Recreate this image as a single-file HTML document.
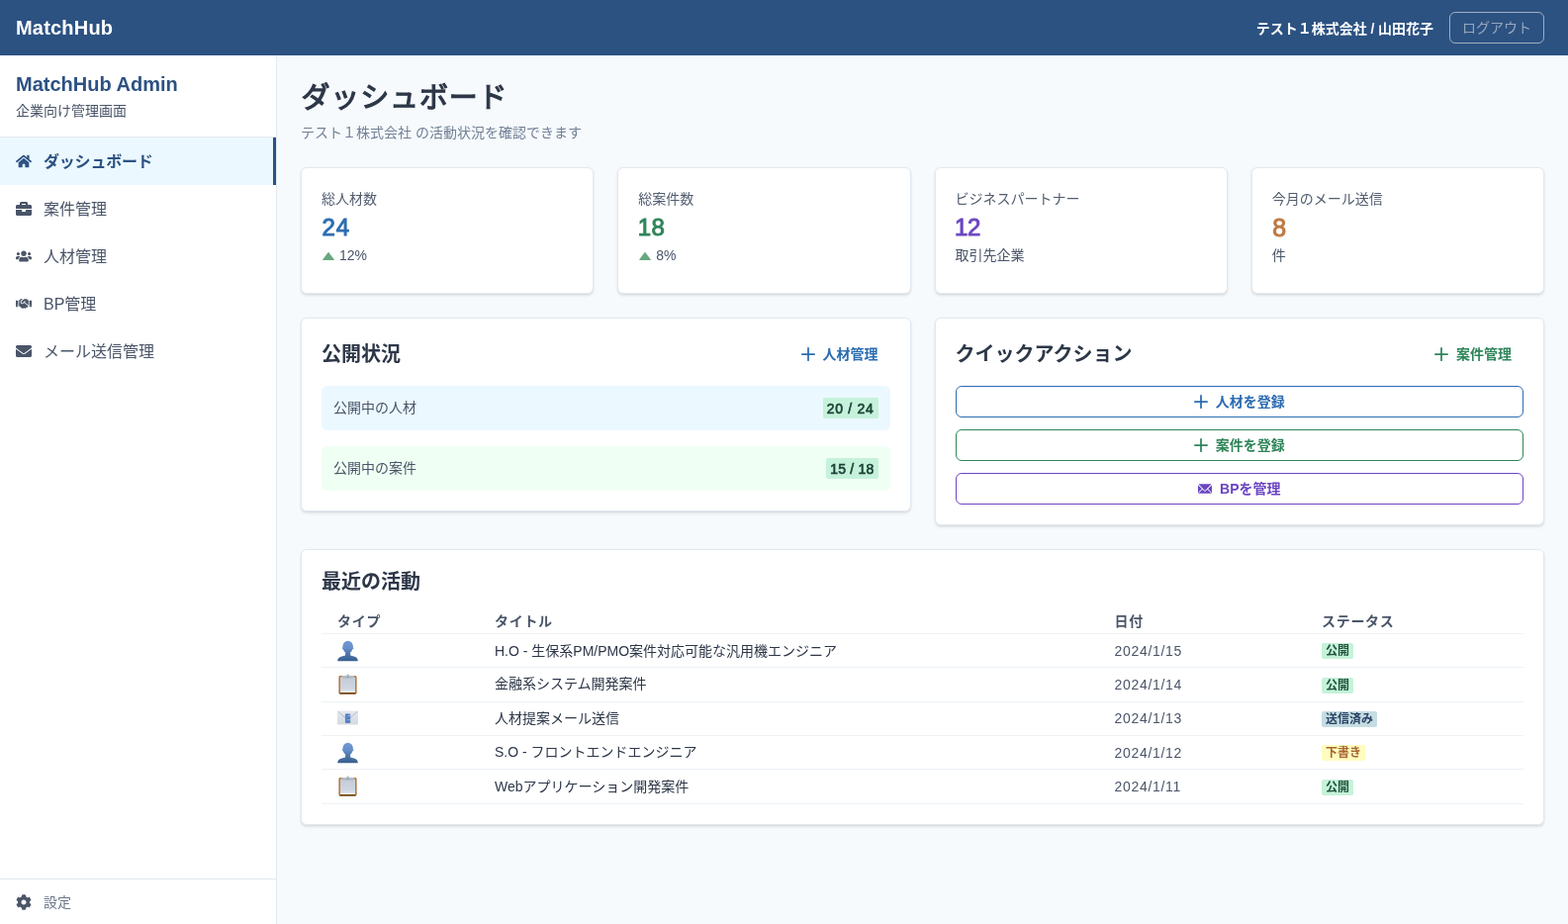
<!DOCTYPE html>
<html lang="ja">
<head>
<meta charset="utf-8">
<title>MatchHub Admin</title>
<style>
*{box-sizing:border-box;margin:0;padding:0}
html,body{width:1585px;height:934px;overflow:hidden}
body{will-change:transform;font-family:"Liberation Sans","Noto Sans CJK JP",sans-serif;background:#f7fafc;color:#1a202c;font-size:16px;line-height:1.5;position:relative}
svg{display:block}
/* header */
.top{position:absolute;left:0;top:0;width:1585px;height:56px;background:#2c5282;color:#fff}
.top .logo{position:absolute;left:16px;top:13px;font-size:20px;font-weight:700;line-height:30px;letter-spacing:.2px}
.top .user{position:absolute;right:136px;top:17.5px;font-size:14px;font-weight:700;line-height:22px;white-space:nowrap;word-spacing:-.2px}
.top .logout{position:absolute;left:1465px;top:12px;width:96px;height:32px;border:1px solid #a0aec0;border-radius:6px;color:#98a7bb;font-size:14px;font-weight:400;line-height:30px;text-align:center}
/* sidebar */
.side{position:absolute;left:0;top:56px;width:280px;height:878px;background:#fff;border-right:1px solid #e2e8f0}
.side .brand{height:83px;border-bottom:1px solid #e2e8f0;padding:14px 16px 0}
.side .brand h2{font-size:20px;font-weight:700;color:#2c5282;line-height:30px}
.side .brand p{font-size:14px;color:#4a5568;line-height:21px;padding-top:2px}
.nav a{display:flex;align-items:center;height:48px;padding:0 16px;color:#4a5568;font-size:16px;text-decoration:none;border-right:3px solid transparent}
.nav a svg{width:16px;height:16px;margin-right:12px;fill:#4a5568;flex:none}
.nav a.on{background:#ebf8ff;color:#2c5282;font-weight:700;border-right-color:#2c5282;letter-spacing:-.2px}
.nav a span,.foot span{position:relative;top:.5px}
.nav a.on svg{fill:#2c5282}
.side .foot{position:absolute;left:0;bottom:0;width:279px;height:46px;border-top:1px solid #e2e8f0;display:flex;align-items:center;padding:0 16px;color:#6b7789;font-size:14px}
.side .foot svg{width:16px;height:16px;margin-right:12px;fill:#4a5568}
/* main */
.main{position:absolute;left:280px;top:56px;width:1305px;height:878px}
h1{position:absolute;left:24.5px;top:24.5px;font-size:29px;font-weight:400;-webkit-text-stroke:1.2px currentColor;color:#2d3748;line-height:36px;white-space:nowrap;letter-spacing:.85px}
.sub{position:absolute;left:24px;top:68px;font-size:14px;color:#718096;line-height:21px;white-space:nowrap}
.card{position:absolute;background:#fff;border:1px solid #e2e8f0;border-radius:6px;box-shadow:0 1.5px 3px 0 rgba(0,0,0,.09),0 1px 2px 0 rgba(0,0,0,.06)}
.stat{width:296.25px;height:128px;top:113px;padding:21px 20px 0}
.stat .l{font-size:14px;font-weight:400;color:#525d70;line-height:21px}
.stat .n{font-size:24px;font-weight:400;line-height:36px;-webkit-text-stroke:.95px currentColor;letter-spacing:.6px;padding-left:.5px}
.stat .h{font-size:14px;color:#4a5568;line-height:21px;display:flex;align-items:center}
.stat .h svg{width:14px;height:14px;fill:#68a87e;margin-right:4px}
.card h3{font-size:20px;font-weight:700;color:#2d3748;line-height:24px}
.hd{display:flex;justify-content:space-between;align-items:center;height:32px;margin-bottom:16px}
.lnk{display:flex;align-items:center;font-size:14px;font-weight:600;padding:0 12px;height:32px}
.lnk svg,.btn svg{width:14px;height:14px;margin-right:8px}
.row{display:flex;justify-content:space-between;align-items:center;height:45px;border-radius:6px;padding:0 12px;font-size:14px;color:#4a5568}
.bdg{font-weight:700;border-radius:2px;padding:0 4px;white-space:nowrap}
.bdg.num{background:#c5f2da;color:#1e4238;font-weight:400;-webkit-text-stroke:.65px currentColor;height:21px;line-height:20px;padding-top:1px;box-sizing:border-box}
.btn{display:flex;align-items:center;justify-content:center;height:32px;border:1px solid;border-radius:6px;font-size:14px;font-weight:600;margin-bottom:12px}
table{border-collapse:separate;border-spacing:0;width:100%;table-layout:fixed}
th{text-align:left;font-size:14px;font-weight:700;color:#4a5568;padding:0 16px;height:25px;border-bottom:1px solid #edf2f7;line-height:20px;letter-spacing:.7px}
td{font-size:14px;color:#2d3748;padding:0 16px;height:34px;border-bottom:1px solid #edf2f7;line-height:20px;white-space:nowrap}
tr.t td{height:35px}
tr.u td:nth-child(2),tr.u3 td:nth-child(3){padding-bottom:2px}
td.d{color:#4a5568;letter-spacing:.7px}
td .bdg{font-size:12px;display:inline-block;line-height:16px;vertical-align:middle;position:relative;top:-1px}
tr.t td .bdg{top:0}
td svg{width:22px;height:22px}
</style>
</head>
<body>
<div class="top">
  <div class="logo">MatchHub</div>
  <div class="user">テスト１株式会社 / 山田花子</div>
  <div class="logout">ログアウト</div>
</div>

<div class="side">
  <div class="brand">
    <h2>MatchHub Admin</h2>
    <p>企業向け管理画面</p>
  </div>
  <div class="nav">
    <a class="on"><svg viewBox="0 0 576 512"><path d="M280.37 148.26L96 300.11V464a16 16 0 0 0 16 16l112.06-.29a16 16 0 0 0 15.92-16V368a16 16 0 0 1 16-16h64a16 16 0 0 1 16 16v95.64a16 16 0 0 0 16 16.05L464 480a16 16 0 0 0 16-16V300L295.67 148.26a12.190 12.190 0 0 0-15.300 0zM571.600 251.470L488 182.560V44.050a12 12 0 0 0-12-12h-56a12 12 0 0 0-12 12v72.610L318.470 43a48 48 0 0 0-61 0L4.340 251.470a12 12 0 0 0-1.600 16.900l25.500 31A12 12 0 0 0 45.150 301l235.220-193.740a12.190 12.190 0 0 1 15.300 0L530.900 301a12 12 0 0 0 16.900-1.600l25.500-31a12 12 0 0 0-1.700-16.930z"/></svg><span>ダッシュボード</span></a>
    <a><svg viewBox="0 0 512 512"><path d="M320 336c0 8.840-7.160 16-16 16h-96c-8.840 0-16-7.160-16-16v-48H0v144c0 25.600 22.400 48 48 48h416c25.600 0 48-22.400 48-48V288H320v48zm144-208h-80V80c0-25.600-22.400-48-48-48H176c-25.600 0-48 22.400-48 48v48H48c-25.600 0-48 22.400-48 48v80h512v-80c0-25.600-22.400-48-48-48zm-144 0H192V96h128v32z"/></svg><span>案件管理</span></a>
    <a><svg viewBox="0 0 640 512"><path d="M96 224c35.300 0 64-28.700 64-64s-28.700-64-64-64-64 28.700-64 64 28.700 64 64 64zm448 0c35.300 0 64-28.700 64-64s-28.700-64-64-64-64 28.700-64 64 28.700 64 64 64zm32 32h-64c-17.600 0-33.500 7.100-45.100 18.600 40.300 22.100 68.900 62 75.100 109.400h66c17.700 0 32-14.300 32-32v-32c0-35.300-28.700-64-64-64zm-256 0c61.900 0 112-50.100 112-112S381.900 32 320 32 208 82.100 208 144s50.100 112 112 112zm76.800 32h-8.300c-20.800 10-43.900 16-68.500 16s-47.600-6-68.500-16h-8.300C179.600 288 128 339.600 128 403.200V432c0 26.500 21.500 48 48 48h288c26.500 0 48-21.500 48-48v-28.800c0-63.600-51.600-115.200-115.200-115.200zm-223.700-13.400C161.500 263.100 145.600 256 128 256H64c-35.300 0-64 28.700-64 64v32c0 17.700 14.300 32 32 32h65.900c6.300-47.400 34.900-87.300 75.200-109.400z"/></svg><span>人材管理</span></a>
    <a><svg viewBox="0 0 640 512"><path d="M434.700 64h-85.900c-8 0-15.700 3-21.600 8.400l-98.300 90c-.1.100-.2.300-.3.400-16.600 15.600-16.300 40.500-2.100 56 12.700 13.900 39.400 17.600 56.100 2.700.1-.1.300-.1.400-.2l79.900-73.200c6.500-5.900 16.700-5.500 22.600 1 6 6.500 5.500 16.600-1 22.600l-26.100 23.900L504 313.800c2.900 2.400 5.500 5 7.900 7.700V128l-54.600-54.600c-5.900-6-14.100-9.400-22.600-9.400zM544 128.200v223.900c0 17.700 14.300 32 32 32h64V128.200h-96zm48 223.900c-8.800 0-16-7.200-16-16s7.200-16 16-16 16 7.200 16 16-7.200 16-16 16zM0 384h64c17.700 0 32-14.300 32-32V128.200H0V384zm48-63.900c8.800 0 16 7.200 16 16s-7.200 16-16 16-16-7.200-16-16c0-8.900 7.200-16 16-16zm435.900 18.600L334.600 217.500l-30 27.500c-29.700 27.100-75.200 24.500-101.700-4.400-26.900-29.400-24.800-74.900 4.400-101.700L289.100 64h-83.800c-8.500 0-16.600 3.400-22.600 9.400L128 128v223.900h18.300l90.500 81.900c27.400 22.300 67.700 18.100 90-9.300l.2-.2 17.900 15.500c15.900 13 39.400 10.500 52.300-5.400l31.400-38.600 5.400 4.400c13.700 11.100 33.900 9.100 45-4.700l9.500-11.700c11.200-13.800 9.100-33.900-4.600-45.100z"/></svg><span>BP管理</span></a>
    <a><svg viewBox="0 0 512 512"><path d="M502.300 190.800c3.900-3.100 9.700-.2 9.700 4.700V400c0 26.500-21.500 48-48 48H48c-26.500 0-48-21.500-48-48V195.600c0-5 5.700-7.800 9.700-4.700 22.400 17.400 52.100 39.500 154.100 113.600 21.100 15.400 56.700 47.800 92.200 47.600 35.700.3 72-32.800 92.300-47.600 102-74.100 131.600-96.300 154-113.700zM256 320c23.200.4 56.600-29.200 73.400-41.400 132.700-96.300 142.800-104.700 173.400-128.700 5.800-4.500 9.200-11.500 9.200-18.900v-19c0-26.500-21.500-48-48-48H48C21.500 64 0 85.500 0 112v19c0 7.400 3.400 14.300 9.200 18.900 30.600 23.900 40.700 32.400 173.400 128.700 16.800 12.200 50.200 41.800 73.400 41.400z"/></svg><span>メール送信管理</span></a>
  </div>
  <div class="foot"><svg viewBox="0 0 512 512"><path d="M487.400 315.700l-42.600-24.600c4.300-23.200 4.300-47 0-70.200l42.600-24.600c4.900-2.800 7.100-8.600 5.500-14-11.100-35.600-30-67.800-54.700-94.600-3.800-4.100-10-5.100-14.800-2.300L380.800 110c-17.900-15.400-38.500-27.300-60.800-35.100V25.800c0-5.600-3.900-10.500-9.400-11.700-36.700-8.200-74.300-7.800-109.200 0-5.500 1.200-9.400 6.100-9.400 11.700V75c-22.200 7.900-42.800 19.800-60.800 35.100L88.700 85.500c-4.900-2.800-11-1.900-14.800 2.300-24.700 26.700-43.600 58.900-54.700 94.600-1.700 5.400.6 11.200 5.500 14L67.300 221c-4.300 23.200-4.300 47 0 70.200l-42.600 24.600c-4.900 2.800-7.100 8.600-5.500 14 11.100 35.600 30 67.800 54.700 94.600 3.800 4.100 10 5.100 14.800 2.300l42.600-24.600c17.900 15.400 38.500 27.300 60.800 35.100v49.200c0 5.600 3.900 10.500 9.400 11.700 36.700 8.200 74.300 7.800 109.200 0 5.500-1.200 9.400-6.100 9.400-11.700v-49.200c22.200-7.900 42.800-19.800 60.800-35.100l42.600 24.600c4.900 2.800 11 1.900 14.800-2.300 24.700-26.700 43.600-58.900 54.700-94.600 1.500-5.500-.7-11.300-5.600-14.100zM256 336c-44.100 0-80-35.900-80-80s35.900-80 80-80 80 35.900 80 80-35.900 80-80 80z"/></svg><span>設定</span></div>
</div>

<div class="main">
  <h1>ダッシュボード</h1>
  <div class="sub">テスト１株式会社 の活動状況を確認できます</div>
  
  <div class="card stat" style="left:24px"><div class="l">総人材数</div><div class="n" style="color:#2b6cb0;letter-spacing:.9px">24</div><div class="h"><svg viewBox="0 0 24 24"><path d="M12.8,5.4c-0.377-0.504-1.223-0.504-1.6,0l-9,12c-0.228,0.303-0.264,0.708-0.095,1.047C2.275,18.786,2.621,19,3,19h18c0.379,0,0.725-0.214,0.895-0.553c0.169-0.339,0.133-0.744-0.095-1.047L12.8,5.4z"/></svg>12%</div></div>
  <div class="card stat" style="left:344.25px"><div class="l">総案件数</div><div class="n" style="color:#2f855a;margin-left:-1px;letter-spacing:.3px">18</div><div class="h"><svg viewBox="0 0 24 24"><path d="M12.8,5.4c-0.377-0.504-1.223-0.504-1.6,0l-9,12c-0.228,0.303-0.264,0.708-0.095,1.047C2.275,18.786,2.621,19,3,19h18c0.379,0,0.725-0.214,0.895-0.553c0.169-0.339,0.133-0.744-0.095-1.047L12.8,5.4z"/></svg>8%</div></div>
  <div class="card stat" style="left:664.5px"><div class="l">ビジネスパートナー</div><div class="n" style="color:#6b46c1;margin-left:-1px;letter-spacing:-.4px">12</div><div class="h">取引先企業</div></div>
  <div class="card stat" style="left:984.75px"><div class="l">今月のメール送信</div><div class="n" style="color:#bd7a42;font-size:25px">8</div><div class="h">件</div></div>

  
  <div class="card" style="left:24px;top:265px;width:616.5px;height:196px;padding:20px">
    <div class="hd"><h3>公開状況</h3><div class="lnk" style="color:#2b6cb0"><svg viewBox="0 0 24 24" fill="currentColor"><path d="M0,12a1.5,1.5,0,0,0,1.5,1.5h8.75a.25.25,0,0,1,.25.25V22.5a1.5,1.5,0,0,0,3,0V13.75a.25.25,0,0,1,.25-.25H22.5a1.5,1.5,0,0,0,0-3H13.75a.25.25,0,0,1-.25-.25V1.5a1.5,1.5,0,0,0-3,0v8.750a.25.25,0,0,1-.25.25H1.5A1.5,1.5,0,0,0,0,12Z"/></svg>人材管理</div></div>
    <div class="row" style="background:#ebf8ff;margin-bottom:16px"><span>公開中の人材</span><span class="bdg num" style="letter-spacing:.72px">20 / 24</span></div>
    <div class="row" style="background:#f0fff4"><span>公開中の案件</span><span class="bdg num" style="letter-spacing:.2px">15 / 18</span></div>
  </div>
  <div class="card" style="left:664.5px;top:265px;width:616.5px;height:210px;padding:20px">
    <div class="hd"><h3>クイックアクション</h3><div class="lnk" style="color:#2f855a"><svg viewBox="0 0 24 24" fill="currentColor"><path d="M0,12a1.5,1.5,0,0,0,1.5,1.5h8.75a.25.25,0,0,1,.25.25V22.5a1.5,1.5,0,0,0,3,0V13.75a.25.25,0,0,1,.25-.25H22.5a1.5,1.5,0,0,0,0-3H13.75a.25.25,0,0,1-.25-.25V1.5a1.5,1.5,0,0,0-3,0v8.750a.25.25,0,0,1-.25.25H1.5A1.5,1.5,0,0,0,0,12Z"/></svg>案件管理</div></div>
    <div class="btn" style="color:#2b6cb0;border-color:#2b6cb0"><svg viewBox="0 0 24 24" fill="currentColor"><path d="M0,12a1.5,1.5,0,0,0,1.5,1.5h8.75a.25.25,0,0,1,.25.25V22.5a1.5,1.5,0,0,0,3,0V13.75a.25.25,0,0,1,.25-.25H22.5a1.5,1.5,0,0,0,0-3H13.75a.25.25,0,0,1-.25-.25V1.5a1.5,1.5,0,0,0-3,0v8.750a.25.25,0,0,1-.25.25H1.5A1.5,1.5,0,0,0,0,12Z"/></svg>人材を登録</div>
    <div class="btn" style="color:#2f855a;border-color:#2f855a"><svg viewBox="0 0 24 24" fill="currentColor"><path d="M0,12a1.5,1.5,0,0,0,1.5,1.5h8.75a.25.25,0,0,1,.25.25V22.5a1.5,1.5,0,0,0,3,0V13.75a.25.25,0,0,1,.25-.25H22.5a1.5,1.5,0,0,0,0-3H13.75a.25.25,0,0,1-.25-.25V1.5a1.5,1.5,0,0,0-3,0v8.750a.25.25,0,0,1-.25.25H1.5A1.5,1.5,0,0,0,0,12Z"/></svg>案件を登録</div>
    <div class="btn" style="color:#6b46c1;border-color:#6b46c1"><svg viewBox="0 0 24 24" fill="currentColor"><path d="M11.114,14.556a1.252,1.252,0,0,0,1.768,0L22.568,4.87a.5.5,0,0,0-.281-.849A1.966,1.966,0,0,0,22,4H2a1.966,1.966,0,0,0-.289.021.5.5,0,0,0-.281.849Z"/><path d="M23.888,5.832a.182.182,0,0,0-.2.039l-6.2,6.2a.251.251,0,0,0,0,.354l5.043,5.043a.75.75,0,1,1-1.060,1.061l-5.043-5.043a.25.25,0,0,0-.354,0l-2.129,2.129a2.75,2.75,0,0,1-3.888,0L7.926,13.488a.251.251,0,0,0-.354,0L2.529,18.531a.75.75,0,0,1-1.060-1.061l5.043-5.043a.251.251,0,0,0,0-.354l-6.2-6.2a.18.18,0,0,0-.2-.039A.182.182,0,0,0,0,6V18a2,2,0,0,0,2,2H22a2,2,0,0,0,2-2V6A.181.181,0,0,0,23.888,5.832Z"/></svg>BPを管理</div>
  </div>

  
  <div class="card" style="left:24px;top:499px;width:1257px;height:279px;padding:20px">
    <h3 style="margin-bottom:16px">最近の活動</h3>
    <table>
      <colgroup><col style="width:159px"><col style="width:626.5px"><col style="width:209.5px"><col></colgroup>
      <tr><th>タイプ</th><th>タイトル</th><th>日付</th><th>ステータス</th></tr>
      <tr><td><svg viewBox="0 0 22 22"><defs><linearGradient id="pg1" gradientUnits="userSpaceOnUse" x1="0" y1=".8" x2="0" y2="21.4"><stop offset="0" stop-color="#7199d5"/><stop offset=".35" stop-color="#668ec9"/><stop offset=".55" stop-color="#547db1"/><stop offset=".78" stop-color="#466d9f"/><stop offset="1" stop-color="#385d8f"/></linearGradient></defs><g fill="url(#pg1)"><ellipse cx="10.650" cy="6.900" rx="5.300" ry="6.100"/><circle cx="5.500" cy="8.300" r=".75"/><circle cx="15.800" cy="8.300" r=".75"/><path d="M8.100 11.500h5.100v4.100l4.400 1.200c2.300.7 3.100 2.400 3.200 4.550H.2c.1-2.150 1.100-3.850 3.400-4.550l4.500-1.200z"/></g></svg></td><td>H.O - 生保系PM/PMO案件対応可能な汎用機エンジニア</td><td class="d">2024/1/15</td><td><span class="bdg" style="background:#c5f2da;color:#22543d">公開</span></td></tr>
      <tr class="t u"><td><svg viewBox="0 0 22 22"><defs><linearGradient id="cg1" x1="0" y1="0" x2="0" y2="1"><stop offset="0" stop-color="#c4ccd8"/><stop offset=".75" stop-color="#cfd6e1"/><stop offset="1" stop-color="#ecf0f4"/></linearGradient></defs><rect x="1.700" y="1.900" width="17.600" height="18.950" rx="1.500" fill="#754410"/><rect x="1.700" y="1.900" width="17.600" height="17.200" rx="1.500" fill="#c27935"/><rect x="1.700" y="17" width="1.300" height="2.500" fill="#c27935"/><rect x="18" y="17" width="1.300" height="2.500" fill="#c27935"/><rect x="3" y="3.300" width="15" height="15.800" rx=".4" fill="url(#cg1)"/><path d="M4.300 2h4.700L10.700 0l1.700 2h4.700l-.9 2.800H5.200z" fill="#b2bac5"/><circle cx="10.700" cy="3.500" r=".6" fill="#5f6f96"/></svg></td><td>金融系システム開発案件</td><td class="d">2024/1/14</td><td><span class="bdg" style="background:#c5f2da;color:#22543d">公開</span></td></tr>
      <tr class="u u3"><td><svg viewBox="0 0 22 22"><defs><linearGradient id="eg" x1="0" y1="0" x2="0" y2="1"><stop offset="0" stop-color="#e6e9ef"/><stop offset="1" stop-color="#d3d9e1"/></linearGradient></defs><rect x="0" y="2.400" width="21" height="14.100" rx=".9" fill="url(#eg)"/><path d="M.6 3.200l9.900 8.500 9.900-8.500" fill="none" stroke="#b1b9c6" stroke-width=".9"/><rect x="7.900" y="5.500" width="5.300" height="9" rx=".7" fill="#5a86cc"/><rect x="7.900" y="13.700" width="5.300" height=".8" rx=".3" fill="#3f5e94"/><path d="M10.200 7.400h3M10.200 11.200h3" stroke="#a9c0e6" stroke-width=".9" fill="none"/><path d="M9.800 6.600h1.200M10.600 10.300h1.600" stroke="#2f4a7c" stroke-width=".8" fill="none"/></svg></td><td>人材提案メール送信</td><td class="d">2024/1/13</td><td><span class="bdg" style="background:#c5dde2;color:#2a4365">送信済み</span></td></tr>
      <tr class="u"><td><svg viewBox="0 0 22 22"><defs><linearGradient id="pg2" gradientUnits="userSpaceOnUse" x1="0" y1=".8" x2="0" y2="21.4"><stop offset="0" stop-color="#7199d5"/><stop offset=".35" stop-color="#668ec9"/><stop offset=".55" stop-color="#547db1"/><stop offset=".78" stop-color="#466d9f"/><stop offset="1" stop-color="#385d8f"/></linearGradient></defs><g fill="url(#pg2)"><ellipse cx="10.650" cy="6.900" rx="5.300" ry="6.100"/><circle cx="5.500" cy="8.300" r=".75"/><circle cx="15.800" cy="8.300" r=".75"/><path d="M8.100 11.500h5.100v4.100l4.400 1.200c2.300.7 3.100 2.400 3.200 4.550H.2c.1-2.150 1.100-3.850 3.400-4.550l4.500-1.200z"/></g></svg></td><td>S.O - フロントエンドエンジニア</td><td class="d">2024/1/12</td><td><span class="bdg" style="background:#fefcbf;color:#a5652f">下書き</span></td></tr>
      <tr class="t"><td><svg viewBox="0 0 22 22"><defs><linearGradient id="cg2" x1="0" y1="0" x2="0" y2="1"><stop offset="0" stop-color="#c4ccd8"/><stop offset=".75" stop-color="#cfd6e1"/><stop offset="1" stop-color="#ecf0f4"/></linearGradient></defs><rect x="1.700" y="1.900" width="17.600" height="18.950" rx="1.500" fill="#754410"/><rect x="1.700" y="1.900" width="17.600" height="17.200" rx="1.500" fill="#c27935"/><rect x="1.700" y="17" width="1.300" height="2.500" fill="#c27935"/><rect x="18" y="17" width="1.300" height="2.500" fill="#c27935"/><rect x="3" y="3.300" width="15" height="15.800" rx=".4" fill="url(#cg2)"/><path d="M4.300 2h4.700L10.700 0l1.700 2h4.700l-.9 2.800H5.200z" fill="#b2bac5"/><circle cx="10.700" cy="3.500" r=".6" fill="#5f6f96"/></svg></td><td>Webアプリケーション開発案件</td><td class="d">2024/1/11</td><td><span class="bdg" style="background:#c5f2da;color:#22543d">公開</span></td></tr>
    </table>
  </div>

</div>
</body>
</html>
